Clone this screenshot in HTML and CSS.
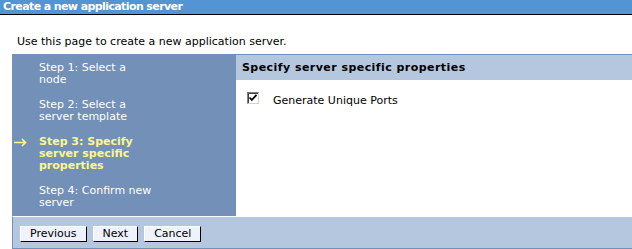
FILE: index.html
```html
<!DOCTYPE html>
<html>
<head>
<meta charset="utf-8">
<link rel="stylesheet" href="styles.css">
</head>
<body>
<div class="titlebar">Create a new application server</div>
<div class="intro">Use this page to create a new application server.</div>
<div class="wizard">
  <div class="wiz-main">
    <div class="steps">
      <div class="step">Step 1: Select a node</div>
      <div class="step">Step 2: Select a server template</div>
      <div class="step current"><svg class="arrow" width="13" height="9" viewBox="0 0 13 9"><path d="M0 4.5 H11.5 M8 1 L11.5 4.5 L8 8" fill="none" stroke="#fff68c" stroke-width="1.6"/></svg>Step 3: Specify server specific properties</div>
      <div class="step">Step 4: Confirm new server</div>
    </div>
    <div class="content">
      <div class="content-head">Specify server specific properties</div>
      <div class="field">
        <span class="check"><svg width="10" height="10" viewBox="0 0 10 10"><path d="M1.5 4.5 L3.8 7 L8.5 1.8" fill="none" stroke="#000" stroke-width="1.8"/></svg></span>
        <span class="label">Generate Unique Ports</span>
      </div>
    </div>
  </div>
  <div class="buttons">
    <button class="btn">Previous</button>
    <button class="btn">Next</button>
    <button class="btn">Cancel</button>
  </div>
</div>
</body>
</html>
```
FILE: styles.css
```css
html, body { margin: 0; padding: 0; background: #fff; }
body { font-family: "DejaVu Sans", Verdana, sans-serif; font-size: 11px; color: #000; width: 632px; height: 249px; overflow: hidden; }
.titlebar { background: #5294d4; color: #fff; font-weight: bold; font-size: 11px; letter-spacing: -0.6px; height: 14px; line-height: 14px; padding-left: 3px; border-bottom: 1px solid #000; }
.intro { padding: 20px 0 0 17px; height: 19px; line-height: 14px; }
.wizard { margin-left: 12px; display: flex; flex-direction: column; }
.wiz-main { display: flex; height: 162px; }
.steps { width: 224px; background: #7290b8; color: #fff; padding-top: 8px; box-sizing: border-box; }
.step { position: relative; margin-left: 27px; width: 115px; line-height: 12px; margin-bottom: 13px; }
.step.current { color: #fff68c; font-weight: bold; }
.arrow { position: absolute; left: -25px; top: 2px; }
.content { flex: 1; }
.content-head { background: #b5c7de; border-top: 1px solid #7290b8; height: 25px; line-height: 25px; padding-left: 6px; font-weight: bold; font-size: 11px; letter-spacing: 0.45px; }
.field { display: flex; align-items: flex-start; padding: 12px 0 0 11px; }
.check { width: 10px; height: 10px; border: 1px solid #808080; border-right-color: #d4d0c8; border-bottom-color: #d4d0c8; background: #fff; display: inline-flex; box-shadow: inset 1px 1px 0 #404040; }
.check svg { display: block; }
.label { margin-left: 14px; line-height: 14px; margin-top: 2px; }
.buttons { background: #b5c7de; border-left: 1px solid #7290b8; border-bottom: 1px solid #7290b8; border-top: 1px solid #fff; display: flex; align-items: flex-start; padding: 9px 0 0 7px; box-sizing: border-box; height: 33px; gap: 6px; }
.btn { font-family: inherit; font-size: 11px; background: #eef2fb; border: 1px solid #000; border-top-color: #fff; border-left-color: #fff; height: 16px; padding: 0 9px; margin: 0; line-height: 14px; color: #000; }
```
